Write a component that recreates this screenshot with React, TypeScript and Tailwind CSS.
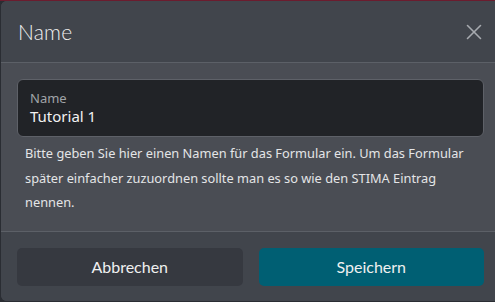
import { X } from 'lucide-react'

export default function App() {
  return (
    <div className="h-[302px] w-[495px] overflow-hidden border-t border-[#6b1c2e] bg-[#2a2d33]">
      <div
        className="ml-px flex w-[499px] flex-col overflow-hidden rounded-l-[6px] bg-[#4a4d54]"
        style={{ fontFamily: 'Lato, "Open Sans", sans-serif' }}
      >
        {/* header */}
        <div className="flex h-[62px] items-center justify-between border-b border-[#5c6067] bg-[#41454c] pl-[17px] pr-[13px]">
          <span className="text-[21px] font-light tracking-[0.2px] text-[#f0f0f0]">Name</span>
          <X className="h-[26px] w-[26px] text-[#a7aaaf]" strokeWidth={1.5} />
        </div>

        {/* body */}
        <div className="flex flex-col px-[16px] pb-[16px] pt-[16px]">
          <div className="flex h-[58px] flex-col justify-center rounded-[6px] border border-[#5e6168] bg-[#212327] px-[12px]">
            <span className="text-[13px] leading-[16px] text-[#a0a3a8]" style={{ fontFamily: '"Noto Sans", sans-serif' }}>
              Name
            </span>
            <span className="text-[15px] leading-[21px] text-[#f2f2f2]" style={{ fontFamily: '"Noto Sans", sans-serif' }}>
              Tutorial 1
            </span>
          </div>
          <p
            className="mt-[4px] pl-[8px] pr-[12px] text-[12.8px] leading-[24.5px] text-[#e4e5e7]"
            style={{ fontFamily: '"Noto Sans", sans-serif' }}
          >
            Bitte geben Sie hier einen Namen für das Formular ein. Um das Formular später einfacher
            zuzuordnen sollte man es so wie den STIMA Eintrag nennen.
          </p>
        </div>

        {/* footer */}
        <div className="flex h-[70px] gap-[16px] border-t border-[#5c6067] bg-[#41454c] px-[16px] pt-[16px]">
          <button className="h-[38px] flex-1 rounded-[5px] bg-[#363940] text-[16px] text-[#f0f0f0]">
            Abbrechen
          </button>
          <button className="h-[38px] flex-1 rounded-[5px] bg-[#005f73] text-[16px] text-[#f0f0f0]">
            Speichern
          </button>
        </div>
      </div>
    </div>
  )
}
